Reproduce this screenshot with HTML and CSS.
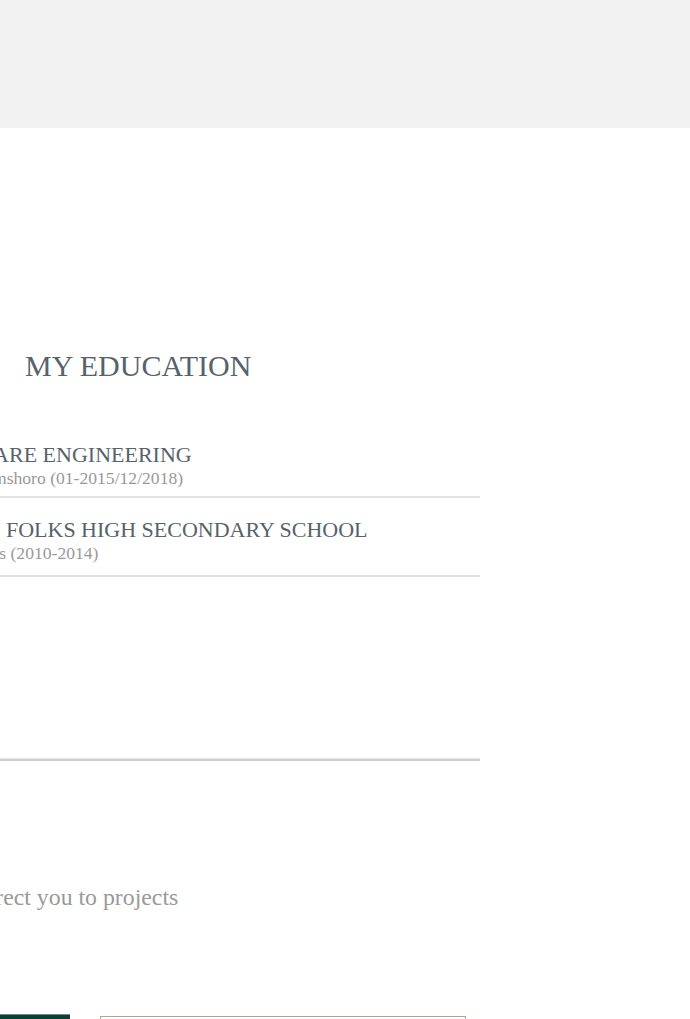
FILE: index.html
```html
<!DOCTYPE html>
<html lang="en">
<head>
<meta charset="utf-8">
<title>My Education</title>
<link rel="stylesheet" href="styles.css">
</head>
<body>
<header class="topbar"></header>
<main class="content">
  <section class="education">
    <h2 class="section-title">MY EDUCATION</h2>
    <ul class="edu-list">
      <li class="edu-item">
        <h3 class="edu-title">SOFTWARE ENGINEERING</h3>
        <p class="edu-meta">MUET, Jamshoro (01-2015/12/2018)</p>
      </li>
      <li class="edu-item">
        <h3 class="edu-title">YOUNG FOLKS HIGH SECONDARY SCHOOL</h3>
        <p class="edu-meta">Mirpurkhas (2010-2014)</p>
      </li>
    </ul>
  </section>
  <div class="divider"></div>
  <section class="projects">
    <p class="projects-note">This will redirect you to projects</p>
    <div class="actions">
      <a class="btn" href="#">Projects</a>
      <div class="field"></div>
    </div>
  </section>
</main>
</body>
</html>
```

FILE: styles.css
```css
html, body {
  margin: 0;
  padding: 0;
  background: #ffffff;
  overflow-x: hidden;
}

body {
  font-family: "Liberation Serif", "Times New Roman", serif;
}

.topbar {
  height: 128px;
  background: #f2f2f2;
}

.content {
  margin-left: -79px;
  width: 559px;
}

.section-title {
  margin: 220px 0 0 104px;
  font-size: 30px;
  line-height: 35px;
  font-weight: normal;
  color: #56636a;
}

.edu-list {
  list-style: none;
  margin: 40px 0 0;
  padding: 0;
}

.edu-item {
  padding: 20px 0 7px;
  border-bottom: 2px solid #e2e2e2;
  white-space: nowrap;
}

.edu-item:last-child {
  padding-bottom: 11px;
}

.edu-title {
  margin: 0;
  font-size: 22px;
  line-height: 24px;
  font-weight: normal;
  color: #56636a;
}

.edu-meta {
  margin: 0;
  font-size: 17.6px;
  line-height: 22px;
  color: #999999;
}

.edu-item:last-child .edu-meta {
  padding-left: 3px;
}

.divider {
  margin-top: 181px;
  height: 2px;
  background: #cecece;
  border-top: 1px solid #e8e8e8;
}

.projects-note {
  margin: 122px 0 0 -54px;
  font-size: 23.8px;
  line-height: 29px;
  color: #999999;
  white-space: nowrap;
}

.actions {
  display: flex;
  align-items: flex-start;
  gap: 30px;
  margin-top: 102px;
}

.btn {
  display: block;
  width: 149px;
  height: 44px;
  background: #0e3d35;
  border-top: 1px solid #5f9188;
  color: #ffffff;
  text-decoration: none;
  text-align: center;
  font-size: 16px;
  line-height: 44px;
}

.field {
  margin-top: 2px;
  width: 366px;
  height: 40px;
  border: 1px solid #b2a58e;
  box-sizing: border-box;
}
```
